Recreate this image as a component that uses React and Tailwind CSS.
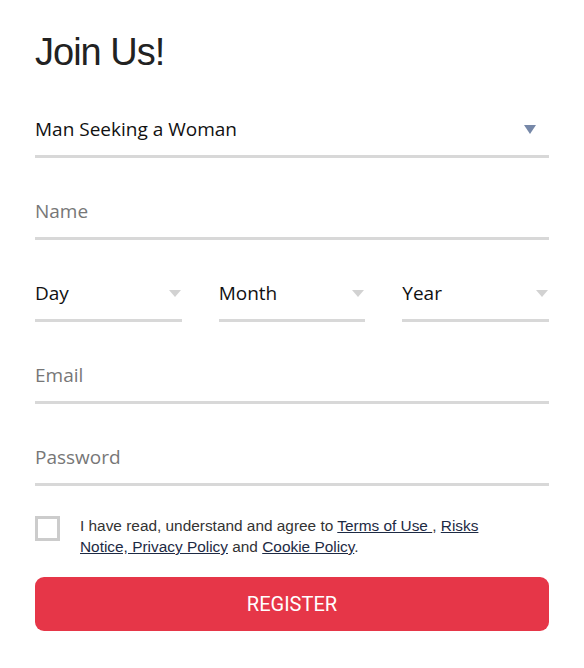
export default function App() {
  const field = "h-[55px] border-b-[3px] border-[#d8d8d8] flex items-center justify-between";
  const sans = { fontFamily: '"Open Sans", "Noto Sans", sans-serif' };
  return (
    <div className="w-[584px] h-[668px] bg-white px-[35px] pt-[28px]">
      <h1 className="text-[38px] leading-[48px] tracking-[-1px] text-[#222] font-['Liberation_Sans',Arial,sans-serif]">Join Us!</h1>
      <div className="mt-[27px]" style={sans}>
        <div className={field + " mb-[27px]"}>
          <span className="text-[19px] text-[#111]">Man Seeking a Woman</span>
          <svg width="12" height="9" viewBox="0 0 12 9" className="mr-[13px]"><path d="M0 0h12L6 9z" fill="#7688a8" /></svg>
        </div>
        <div className={field + " mb-[27px]"}>
          <span className="text-[19px] text-[#777]">Name</span>
        </div>
        <div className="grid grid-cols-3 gap-[37px] mb-[27px]">
          {["Day", "Month", "Year"].map((l) => (
            <div key={l} className={field}>
              <span className="text-[19px] text-[#111]">{l}</span>
              <svg width="12" height="7" viewBox="0 0 12 7" className="mr-[1px]"><path d="M0 0h12L6 7z" fill="#d2d2d2" /></svg>
            </div>
          ))}
        </div>
        <div className={field + " mb-[27px]"}>
          <span className="text-[19px] text-[#777]">Email</span>
        </div>
        <div className={field}>
          <span className="text-[19px] text-[#777]">Password</span>
        </div>
      </div>
      <div className="flex mt-[30px] font-['Liberation_Sans',Arial,sans-serif]">
        <div className="w-[25px] h-[25px] border-[3px] border-[#cccccc] shrink-0"></div>
        <p className="ml-[20px] text-[15.4px] leading-[21px] text-[#333] -mt-[1px]">
          I have read, understand and agree to <a className="underline text-[#1d2a44]">Terms of Use </a>, <a className="underline text-[#1d2a44]">Risks<br />Notice, Privacy Policy</a> and <a className="underline text-[#1d2a44]">Cookie Policy</a>.
        </p>
      </div>
      <button className="mt-[20px] w-full h-[54px] rounded-[9px] bg-[#e63648] text-white text-[20px] font-['Roboto',sans-serif]">REGISTER</button>
    </div>
  );
}
